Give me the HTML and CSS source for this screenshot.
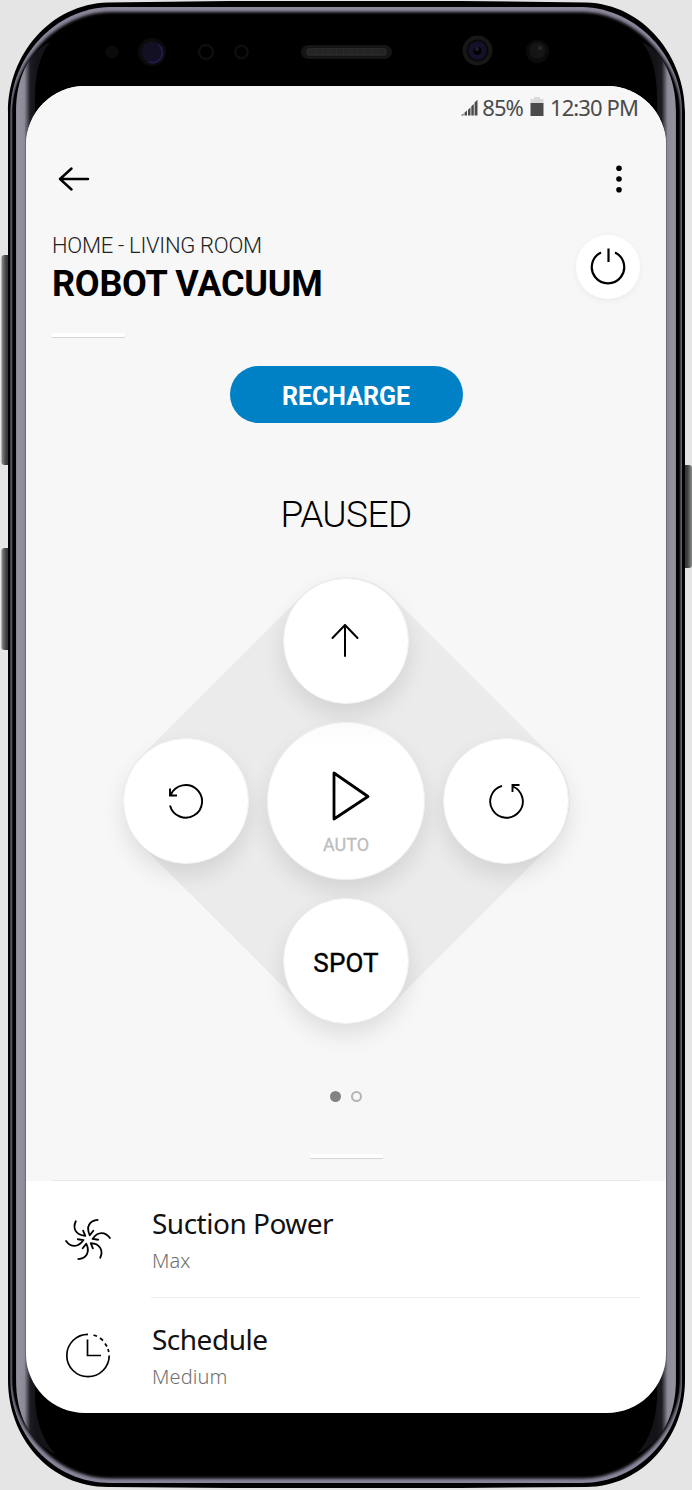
FILE: index.html
```html
<!DOCTYPE html>
<html lang="en">
<head>
<meta charset="utf-8">
<title>Robot Vacuum</title>
<link rel="stylesheet" href="styles.css">
</head>
<body>
<div class="phone">
  <svg class="phone-shell" viewBox="0 0 692 1490" aria-hidden="true">
    <defs>
      <linearGradient id="side" x1="16" x2="36" y1="0" y2="0" gradientUnits="userSpaceOnUse">
        <stop offset="0" stop-color="#85838f"/><stop offset=".1" stop-color="#93929e"/>
        <stop offset=".42" stop-color="#8b8a96"/><stop offset=".52" stop-color="#666570"/><stop offset=".72" stop-color="#1c1b21"/><stop offset="1" stop-color="#141418"/>
      </linearGradient>
      <linearGradient id="key"><stop offset="0" stop-color="#8a8b8b"/><stop offset=".4" stop-color="#3b3c3c"/><stop offset="1" stop-color="#2c2d2d"/></linearGradient>
      <filter id="soft" x="-5%" y="-5%" width="110%" height="110%"><feGaussianBlur stdDeviation="1.6"/></filter>
      <clipPath id="rimclip"><path d="M110 7H582C638 8 682 58 682 112V1380C682 1436 638 1483 582 1483H110C54 1483 10.500 1436 10.500 1380V112C10.500 58 54 8 110 7Z"/></clipPath>
      <pattern id="mesh" width="7" height="6" patternUnits="userSpaceOnUse"><path d="M0 0H7M0 0V6" stroke="#2c2c2c" stroke-width="1"/></pattern>
    </defs>
    <rect x="1.500" y="255" width="12" height="210" rx="3" fill="url(#key)"/>
    <rect x="1.500" y="548" width="12" height="102" rx="3" fill="url(#key)"/>
    <rect x="-692" y="465" width="12" height="103" rx="3" fill="url(#key)" transform="scale(-1 1)"/>
    <path d="M108 2.500L230 1H460L586 2.500C644 4 685 57 685 112V1380C685 1438 642 1487 586 1487L460 1488H230L108 1487C50 1487 8 1438 8 1380V112C8 55 50 4 108 2.500Z" fill="#000"/>
    <g clip-path="url(#rimclip)">
      <rect x="8" y="5" width="678" height="1480" fill="#8b859a"/>
      <path d="M110 12H582C634 12.500 680 60 680.500 112V1380C680 1432 634 1478.500 582 1478.500H110C58 1478.500 12.500 1432 12 1380V112C12.500 60 58 12.500 110 12Z" fill="#000" filter="url(#soft)"/>
      <path d="M110 16H582C634 17 679.500 63 679.500 112V1380C679.500 1428 634 1474 582 1474H110C58 1474 12.500 1428 12.500 1380V112C12.500 63 58 17 110 16Z" fill="#000"/>
    </g>
    <path id="edge" d="M50 42C29 52 16 78 16 112V1380C16 1414 29 1441 55 1454C42 1440 35 1418 35 1394V98C35 74 40 54 50 42Z" fill="url(#side)"/>
    <use href="#edge" transform="translate(692 0) scale(-1 1)"/>
    <path d="M26 124V1370M666 124V1370" stroke="#65656a"/>
    <circle cx="112" cy="52" r="6.500" fill="#0a0a0a"/>
    <circle cx="152" cy="52" r="14" fill="#0b0b0c"/><circle cx="152" cy="52" r="10.500" fill="#141024"/><path d="M159 45a10 10 0 0 1-10 17" fill="none" stroke="#211946" stroke-width="2"/>
    <circle cx="206" cy="52" r="7" fill="none" stroke="#0e0e0f" stroke-width="2.500"/>
    <circle cx="241.500" cy="52" r="6.200" fill="none" stroke="#0e0e0f" stroke-width="2.500"/>
    <rect x="301" y="45" width="91" height="14" rx="7" fill="#151515"/><rect x="306" y="48" width="81" height="8" rx="4" fill="#242424"/><rect x="306" y="48" width="81" height="8" rx="4" fill="url(#mesh)"/>
    <circle cx="477.500" cy="50.500" r="15" fill="#171717"/><circle cx="477.500" cy="50.500" r="11" fill="#0a0a0c"/><circle cx="477.500" cy="50.500" r="9" fill="#13112c"/><circle cx="477.500" cy="51" r="4" fill="#020205"/><circle cx="477" cy="49" r="2" fill="#202029"/>
    <circle cx="537.500" cy="51.500" r="11.500" fill="#0b0b0b"/><circle cx="537.500" cy="50.500" r="8" fill="#151515"/><circle cx="540" cy="48" r="2" fill="#2a2a2a"/>
  </svg>

  <main class="screen">
    <section class="control">
      <div class="status">
        <svg class="signal" viewBox="0 0 17 17"><path d="M0 16.500L2.500 14.500V16.500ZM3.500 13.700L6 11.500V16.500H3.500ZM7 10.700L9.500 8.500V16.500H7ZM10.300 7.200L12.800 5V16.500H10.300ZM13.600 3.500L16.500 .7V16.500H13.600Z"/></svg>
        <span class="percent">85%</span>
        <svg class="battery" viewBox="0 0 14 19"><path class="battery-empty" d="M.5 2H4V0H10V2H13.500V7H.5Z"/><path d="M.5 6H13.500V19H.5Z"/></svg>
        <span class="time">12:30 PM</span>
      </div>
      <nav class="toolbar">
        <svg class="back" viewBox="0 0 32 24"><path d="M30 12H2M13.500 1.500L2 12L13.500 22.500"/></svg>
        <svg class="more" viewBox="0 0 6 28"><circle cx="3" cy="3.200" r="2.800"/><circle cx="3" cy="14" r="2.800"/><circle cx="3" cy="24.800" r="2.800"/></svg>
      </nav>
      <header class="heading">
        <div>
          <p class="location">HOME - LIVING ROOM</p>
          <h1 class="name">ROBOT VACUUM</h1>
        </div>
        <div class="power"><svg viewBox="0 0 36 38"><path d="M11 4.500A16.200 16.200 0 1 0 25 4.500M18.500 .5V14"/></svg></div>
      </header>
      <div class="bar"></div>
      <div class="recharge">RECHARGE</div>
      <p class="state">PAUSED</p>
      <div class="pad">
        <div class="key up"><svg class="i-up" viewBox="0 0 28 34"><path d="M14 33V2M1.500 15L14 2L26.500 15"/></svg></div>
        <div class="key left"><svg class="i-turn" viewBox="0 0 36 36"><path d="M2 22.500A16.300 16.300 0 1 0 3 11.500M2 5.500V12.500H9"/></svg></div>
        <div class="key auto"><svg class="i-play" viewBox="0 0 40 50"><path d="M3 2V48L37 25.500Z"/></svg><span>AUTO</span></div>
        <div class="key right"><svg class="i-turn" viewBox="0 0 36 36"><path d="M14 2.800A16.300 16.300 0 1 0 25 3.500M31.500 2H24.500V9"/></svg></div>
        <div class="key spot">SPOT</div>
      </div>
      <div class="pages"><i class="page current"></i><i class="page"></i></div>
      <div class="bar handle"></div>
    </section>
    <ul class="options">
      <li class="option">
        <svg class="option-icon" viewBox="0 0 46 46">
          <defs><path id="blade" d="M32.700 3.800C25 4.500 20.500 10.500 24.800 19.300L28.300 14.800"/></defs>
          <g class="blades"><use href="#blade"/><use href="#blade" transform="rotate(60 23 23.500)"/><use href="#blade" transform="rotate(120 23 23.500)"/><use href="#blade" transform="rotate(180 23 23.500)"/><use href="#blade" transform="rotate(240 23 23.500)"/><use href="#blade" transform="rotate(300 23 23.500)"/></g>
        </svg>
        <div class="option-text"><p class="option-name">Suction Power</p><p class="option-value">Max</p></div>
      </li>
      <li class="option">
        <svg class="option-icon clock" viewBox="0 0 46 46"><path d="M23 2.300A21.200 21.200 0 1 0 44.200 23.500M22.500 7.500V23.500H36M28.500 3L32 4.300M35 6L38 8.500M40 11.500L42 14.500M43 17L43.800 20"/></svg>
        <div class="option-text"><p class="option-name schedule">Schedule</p><p class="option-value medium">Medium</p></div>
      </li>
    </ul>
  </main>
</div>
</body>
</html>
```
FILE: styles.css
```css
* { box-sizing: border-box; margin: 0; padding: 0; }
body { background: #e5e5e5; font-family: Roboto, "Liberation Sans", sans-serif; color: #000; overflow: hidden; }
svg { display: block; flex: none; fill: none; stroke: #000; stroke-linecap: round; stroke-linejoin: round; }
.phone { position: relative; width: 692px; height: 1490px; padding: 86px 26px 77px; }
.phone-shell { position: absolute; left: 0; top: 0; width: 692px; height: 1490px; stroke: none; }
.screen { position: relative; height: 1327px; border-radius: 59px; overflow: hidden; background: #fff; }
.control { height: 1095px; padding: 0 26px; background: #f7f7f7; display: flex; flex-direction: column; }
.status { height: 42px; padding-right: 2px; display: flex; align-items: center; justify-content: flex-end; font: 400 22px/40px "Noto Sans", sans-serif; color: #4b4b4b; }
.signal, .battery { fill: #4b4b4b; stroke: none; }
.signal { width: 17px; height: 17px; margin-right: 4px; }
.percent { letter-spacing: -.9px; }
.battery { width: 14px; height: 19px; margin: 0 6px 2px 7px; }
.battery-empty { fill: #d9d9d9; }
.time { letter-spacing: -.9px; }
.toolbar { height: 102px; padding: 0 18px 0 6px; display: flex; align-items: center; justify-content: space-between; }
.back { width: 32px; height: 24px; stroke-width: 2.4; }
.more { width: 6px; height: 28px; fill: #000; stroke: none; }
.heading { height: 76px; display: flex; justify-content: space-between; align-items: flex-start; }
.location { font-weight: 300; font-size: 22px; line-height: 32px; letter-spacing: -.28px; color: #222; }
.name { font-weight: 700; font-size: 36px; line-height: 44px; letter-spacing: -.25px; }
.power { width: 64px; height: 64px; margin-top: 5px; border-radius: 50%; background: #fff; box-shadow: 0 2px 7px rgba(0,0,0,.05); display: grid; place-items: center; }
.power svg { width: 36px; height: 38px; stroke-width: 2.2; stroke-linecap: butt; }
.bar { width: 73px; height: 4px; margin-top: 27px; background: #fff; border-radius: 1px; box-shadow: 0 1px 1px rgba(0,0,0,.15); flex: none; }
.recharge { align-self: center; width: 233px; height: 57px; margin-top: 29px; border-radius: 29px; background: #0081c6; color: #fff; font-weight: 700; font-size: 25px; line-height: 61px; text-align: center; }
.state { margin-top: 69px; height: 46px; font-weight: 300; font-size: 37px; line-height: 46px; letter-spacing: -.6px; text-align: center; }
.pad { position: relative; align-self: center; margin-top: 39.5px; display: grid; grid-template: 126px 158px 126px / 126px 158px 126px; gap: 18px; place-items: center; grid-template-areas: ". u ." "l a r" ". s ."; }
.pad::before { content: ""; position: absolute; width: 353px; height: 353px; left: 46.5px; top: 46.5px; border-radius: 63.5px; background: #ebebeb; transform: rotate(45deg); }
.key { position: relative; width: 126px; height: 126px; border-radius: 50%; background: #fff; border: 1px solid #f1f1f1; box-shadow: 0 11px 22px rgba(0,0,0,.1); display: flex; flex-direction: column; align-items: center; justify-content: center; }
.up { grid-area: u; }
.left { grid-area: l; }
.right { grid-area: r; }
.spot { grid-area: s; font-weight: 400; font-size: 26px; padding-top: 4px; letter-spacing: .1px; -webkit-text-stroke: .4px #000; }
.auto { grid-area: a; width: 158px; height: 158px; padding: 24px 0 0; background: linear-gradient(#fbfbfb, #fff 16%); color: #bdbdbd; font-weight: 400; font-size: 18px; -webkit-text-stroke: .3px #bdbdbd; }
.i-up { width: 28px; height: 34px; margin: 0 2px 1px 0; stroke-width: 2; }
.i-turn { width: 36px; height: 36px; stroke-width: 1.9; stroke-linecap: butt; stroke-linejoin: miter; }
.i-play { width: 40px; height: 50px; margin: 0 0 13px 9px; stroke-width: 2.8; }
.pages { height: 14px; margin-top: 66px; display: flex; gap: 10px; align-items: center; justify-content: center; }
.page { width: 11px; height: 11px; border: 2px solid #b5b5b5; border-radius: 50%; }
.current { border-color: #838383; background: #838383; }
.handle { align-self: center; margin-top: 50px; }
.control::after { content: ""; height: 1px; margin-top: auto; background: #e7e7e7; }
.options { list-style: none; }
.option { height: 116px; padding-left: 39px; display: flex; align-items: center; }
.option-icon { width: 46px; height: 46px; }
.blades { stroke-width: 1.8; }
.clock { stroke-width: 1.7; stroke-linecap: butt; stroke-linejoin: miter; }
.option-text { flex: 1; height: 117px; margin: 0 26px 0 40px; padding: 22px 0 0 1px; font-family: "Noto Sans", sans-serif; border-bottom: 1px solid #ebebeb; }
.option:last-child .option-text { border: 0; }
.option-name { font-size: 28px; line-height: 40px; color: #111; letter-spacing: -.5px; }
.option-value { font-size: 20px; line-height: 35px; color: #707070; font-weight: 300; letter-spacing: .1px; }
```
